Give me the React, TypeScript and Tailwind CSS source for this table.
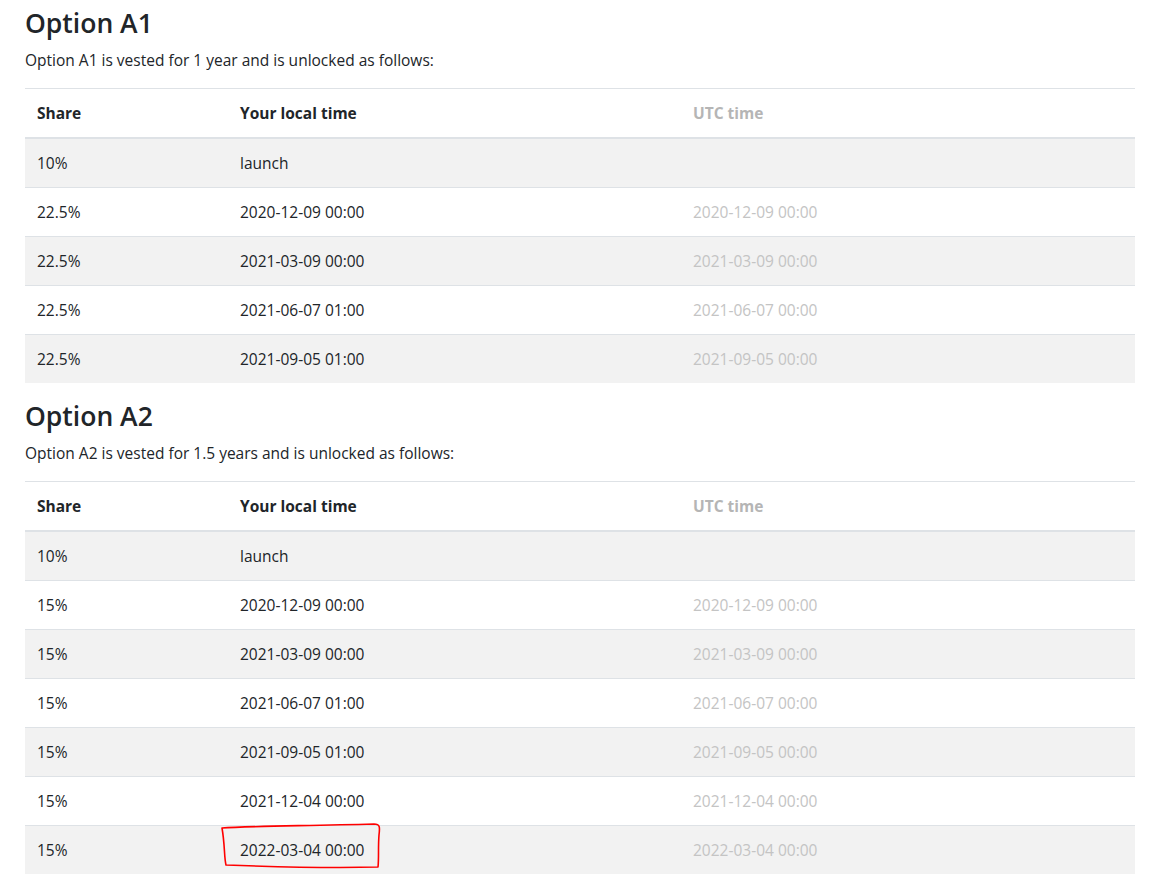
type VestingRow = {
  share: string;
  local: string;
  utc: string;
};

type VestingOption = {
  name: string;
  duration: string;
  rows: VestingRow[];
};

const options: VestingOption[] = [
  {
    name: "Option A1",
    duration: "1 year",
    rows: [
      { share: "10%", local: "launch", utc: "" },
      { share: "22.5%", local: "2020-12-09 00:00", utc: "2020-12-09 00:00" },
      { share: "22.5%", local: "2021-03-09 00:00", utc: "2021-03-09 00:00" },
      { share: "22.5%", local: "2021-06-07 01:00", utc: "2021-06-07 00:00" },
      { share: "22.5%", local: "2021-09-05 01:00", utc: "2021-09-05 00:00" },
    ],
  },
  {
    name: "Option A2",
    duration: "1.5 years",
    rows: [
      { share: "10%", local: "launch", utc: "" },
      { share: "15%", local: "2020-12-09 00:00", utc: "2020-12-09 00:00" },
      { share: "15%", local: "2021-03-09 00:00", utc: "2021-03-09 00:00" },
      { share: "15%", local: "2021-06-07 01:00", utc: "2021-06-07 00:00" },
      { share: "15%", local: "2021-09-05 01:00", utc: "2021-09-05 00:00" },
      { share: "15%", local: "2021-12-04 00:00", utc: "2021-12-04 00:00" },
      { share: "15%", local: "2022-03-04 00:00", utc: "2022-03-04 00:00" },
    ],
  },
];

// hand-drawn red circle around the last unlock date
function Scribble() {
  return (
    <svg
      className="pointer-events-none absolute left-[-20px] top-[-15px] h-[48px] w-[164px]"
      viewBox="0 0 164 48"
      fill="none"
    >
      <path
        d="M2 5 C 30 3, 80 3, 154 1 C 160 1, 160 4, 159 12 C 158 24, 159 36, 158 44 C 120 45, 60 44, 6 42 C 4 34, 5 22, 2 5 Z"
        stroke="#ff0000"
        strokeWidth="1.6"
        strokeLinejoin="round"
      />
    </svg>
  );
}

function VestingTable({ option, markLast }: { option: VestingOption; markLast?: boolean }) {
  return (
    <section>
      <h2 className="mb-2 text-[26.5px] font-semibold leading-[34px] text-[#212529]">
        {option.name}
      </h2>
      <p className="mb-4 leading-6">
        {option.name} is vested for {option.duration} and is unlocked as follows:
      </p>

      <table className="mb-4 w-[1110px] border-collapse text-left">
        <thead>
          <tr>
            <th className="w-[203px] border-t border-b-2 border-[#dee2e6] p-3 font-bold leading-6">
              Share
            </th>
            <th className="w-[453px] border-t border-b-2 border-[#dee2e6] p-3 font-bold leading-6">
              Your local time
            </th>
            <th className="border-t border-b-2 border-[#dee2e6] p-3 font-bold leading-6 text-[#b5b5b5]">
              UTC time
            </th>
          </tr>
        </thead>
        <tbody>
          {option.rows.map((row, i) => {
            const isLast = markLast && i === option.rows.length - 1;
            return (
              <tr key={i} className={i % 2 === 0 ? "bg-[#f2f2f2]" : "bg-white"}>
                <td className={`p-3 leading-6 ${i > 0 ? "border-t border-[#dee2e6]" : ""}`}>
                  {row.share}
                </td>
                <td className={`p-3 leading-6 ${i > 0 ? "border-t border-[#dee2e6]" : ""}`}>
                  <span className="relative inline-block">
                    {row.local}
                    {isLast ? <Scribble /> : null}
                  </span>
                </td>
                <td
                  className={`p-3 leading-6 text-[#c4c4c4] ${i > 0 ? "border-t border-[#dee2e6]" : ""}`}
                >
                  {row.utc}
                </td>
              </tr>
            );
          })}
        </tbody>
      </table>
    </section>
  );
}

export default function App() {
  return (
    <div className="min-h-screen bg-white px-[25px] pt-[6px] font-['Open_Sans',sans-serif] text-[15.5px] text-[#212529]">
      {options.map((option, i) => (
        <VestingTable key={option.name} option={option} markLast={i === 1} />
      ))}
    </div>
  );
}
